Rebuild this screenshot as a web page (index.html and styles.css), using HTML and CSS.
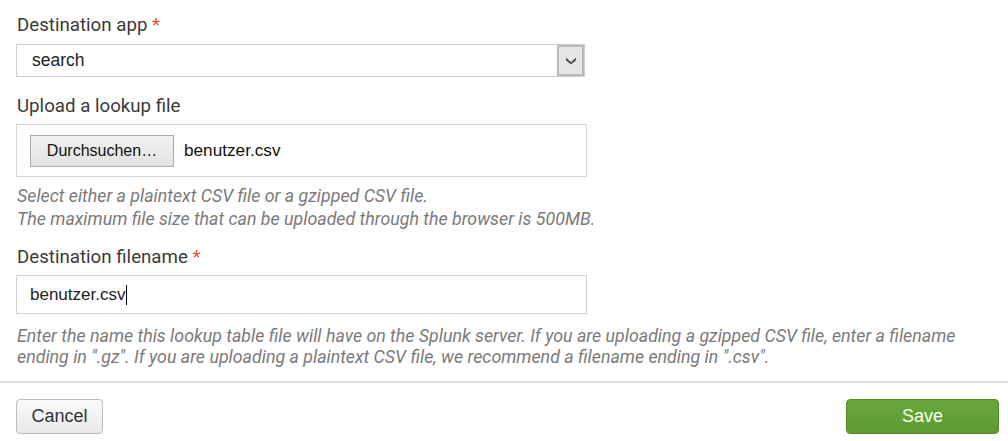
FILE: index.html
```html
<!DOCTYPE html>
<html>
<head>
<meta charset="utf-8">
<link rel="stylesheet" href="styles.css">
</head>
<body>
<div class="form">
  <div class="field">
    <div class="label">Destination app <span class="req">*</span></div>
    <div class="select">
      <span class="select-value">search</span>
      <span class="select-arrow">
        <svg width="12" height="9" viewBox="0 0 12 9"><path d="M1 1.5 L6 6 L11 1.5 L11 4.5 L6 8.5 L1 4.5 Z" fill="#555"/></svg>
      </span>
    </div>
  </div>
  <div class="field field-upload">
    <div class="label">Upload a lookup file</div>
    <div class="filebox">
      <span class="browse">Durchsuchen…</span>
      <span class="filename">benutzer.csv</span>
    </div>
    <div class="help help-upload">
      <div>Select either a plaintext CSV file or a gzipped CSV file.</div>
      <div>The maximum file size that can be uploaded through the browser is 500MB.</div>
    </div>
  </div>
  <div class="field field-name">
    <div class="label">Destination filename <span class="req">*</span></div>
    <div class="textinput"><span>benutzer.csv</span><span class="caret"></span></div>
    <div class="help help-name">Enter the name this lookup table file will have on the Splunk server. If you are uploading a gzipped CSV file, enter a filename ending in ".gz". If you are uploading a plaintext CSV file, we recommend a filename ending in ".csv".</div>
  </div>
</div>
<div class="footer">
  <button class="btn btn-cancel">Cancel</button>
  <button class="btn btn-save">Save</button>
</div>
</body>
</html>
```

FILE: styles.css
```css
html, body {
  margin: 0;
  padding: 0;
  background: #ffffff;
}
body {
  font-family: Roboto, "Liberation Sans", sans-serif;
  color: #333333;
}
.form {
  padding: 15px 16px 0 16px;
}
.label {
  font-size: 18.7px;
  line-height: 20px;
  color: #3a3a3a;
  padding-left: 1px;
}
.req {
  color: #d6563c;
}
.select {
  margin-top: 9px;
  width: 569px;
  height: 33px;
  box-sizing: border-box;
  border: 1px solid #cfcfcf;
  display: flex;
  align-items: stretch;
  justify-content: space-between;
}
.select-value {
  font-family: "Liberation Sans", Arial, sans-serif;
  font-size: 17.5px;
  line-height: 31px;
  padding-left: 15px;
  color: #222;
}
.select-arrow {
  width: 27px;
  box-sizing: border-box;
  background: #e6e6e6;
  border: 2px solid #b9b9b9;
  display: flex;
  align-items: center;
  justify-content: center;
}
.field-upload {
  margin-top: 19px;
}
.filebox {
  margin-top: 8px;
  width: 571px;
  height: 53px;
  box-sizing: border-box;
  border: 1px solid #d6d6d6;
  display: flex;
  align-items: center;
  padding-left: 13px;
}
.browse {
  width: 144px;
  height: 32px;
  box-sizing: border-box;
  border: 1px solid #adadad;
  background: linear-gradient(#f2f2f2, #e2e2e2);
  font-family: "Liberation Sans", Arial, sans-serif;
  font-size: 16px;
  line-height: 30px;
  text-align: center;
  color: #111;
}
.filename {
  margin-left: 10px;
  font-family: "Liberation Sans", Arial, sans-serif;
  font-size: 17.2px;
  color: #111;
}
.help {
  font-style: italic;
  font-size: 17.8px;
  color: #7a7a7a;
  padding-left: 1px;
}
.help-upload {
  margin-top: 7px;
  line-height: 23px;
}
.field-name {
  margin-top: 17px;
}
.textinput {
  margin-top: 8px;
  width: 571px;
  height: 39px;
  box-sizing: border-box;
  border: 1px solid #d3d3d3;
  display: flex;
  align-items: center;
  padding-left: 13px;
  font-family: "Liberation Sans", Arial, sans-serif;
  font-size: 17px;
  color: #222;
}
.caret {
  display: inline-block;
  width: 1px;
  height: 20px;
  background: #000;
  margin-left: 1px;
}
.help-name {
  margin-top: 11px;
  line-height: 21px;
  width: 960px;
}
.footer {
  margin-top: 14px;
  border-top: 2px solid #dcdcdc;
  padding: 16px 9px 0 16px;
  display: flex;
  justify-content: space-between;
}
.btn {
  height: 35px;
  box-sizing: border-box;
  border-radius: 4px;
  font-family: "Liberation Sans", Arial, sans-serif;
  font-size: 18px;
  padding: 0;
  margin: 0;
}
.btn-cancel {
  width: 87px;
  border: 1px solid #bdbdbd;
  background: linear-gradient(#fafafa, #e9e9e9);
  color: #333;
}
.btn-save {
  width: 153px;
  border: 1px solid #4f8a2a;
  background: linear-gradient(#68a83c, #5c9a32);
  color: #f4fff0;
}
```
